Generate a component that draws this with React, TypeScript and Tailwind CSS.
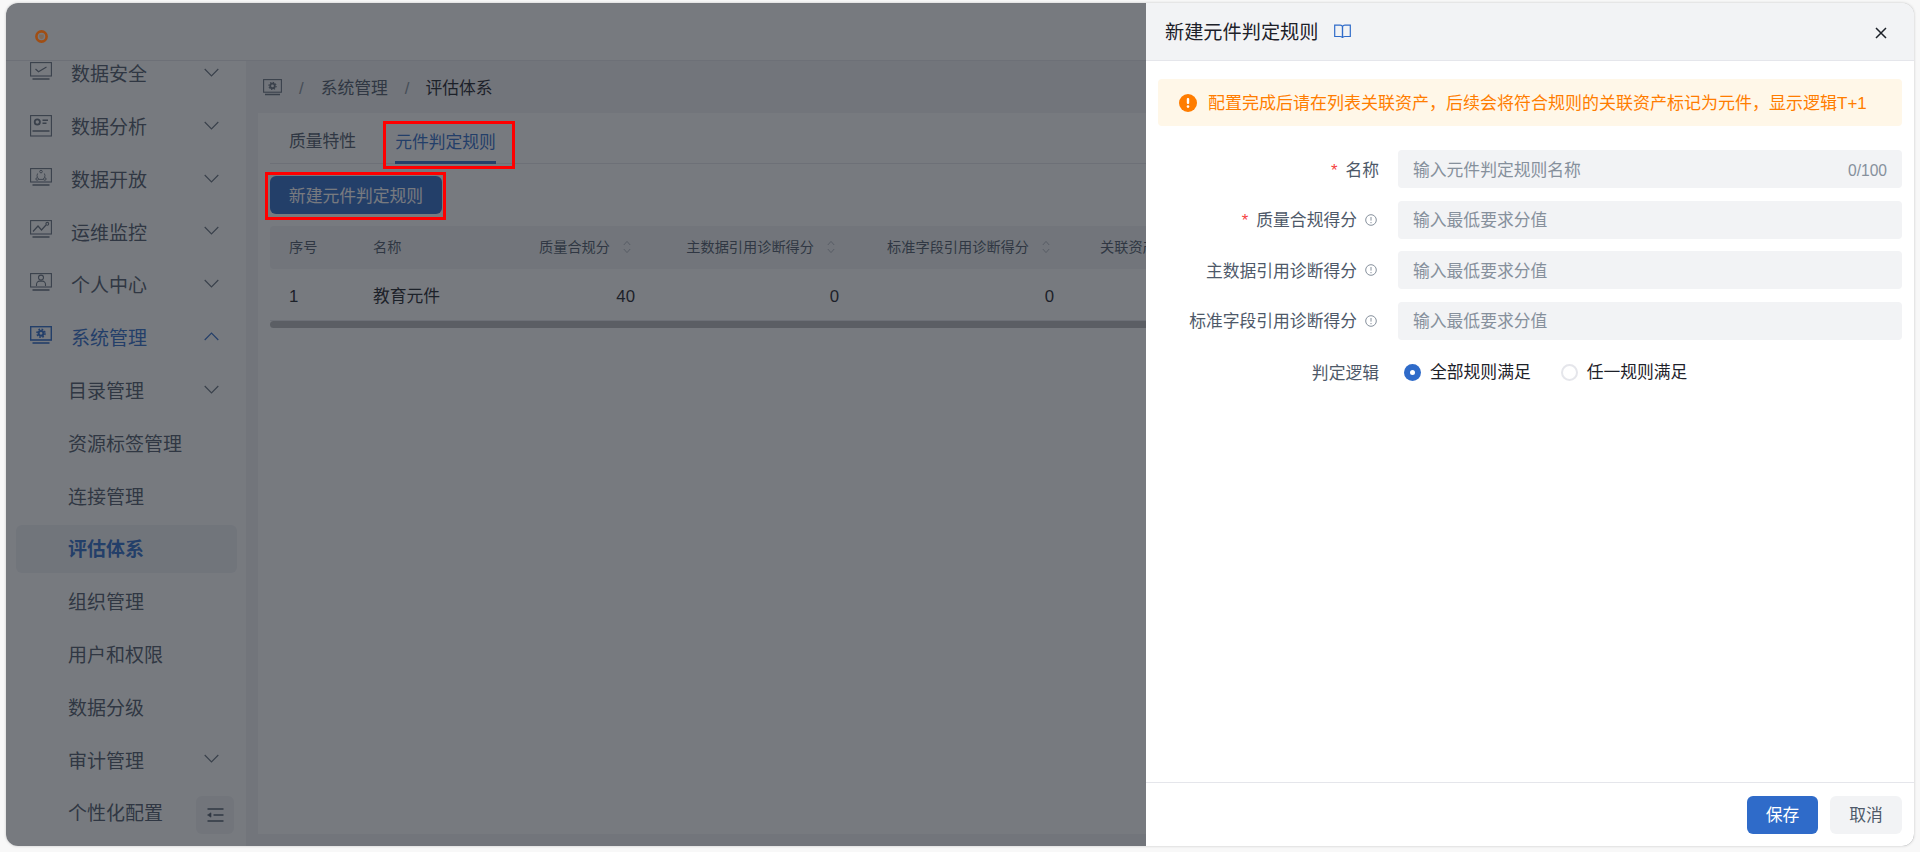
import React from "react";

const FONT = "[font-family:'Liberation_Sans','Noto_Sans_CJK_SC',sans-serif]";

function NavIcon({ children, blue, tall }: { children?: React.ReactNode; blue?: boolean; tall?: boolean }) {
  const c = blue ? "#2f6bc9" : "#66707e";
  return (
    <svg width="22" height="22" viewBox="0 0 22 22" fill="none" stroke={c} strokeWidth="1.1" className="shrink-0 mb-[2px]">
      {tall ? (
        <rect x="0.6" y="0.6" width="20.8" height="20.4" />
      ) : (
        <>
          <rect x="0.6" y="0.6" width="20.8" height="13.4" strokeWidth={blue ? 1.6 : 1.1} />
          <path d="M2.5 17h17" strokeWidth="1.6" />
        </>
      )}
      <g>{children}</g>
    </svg>
  );
}

function Chevron({ up }: { up?: boolean }) {
  return (
    <svg width="15" height="9" viewBox="0 0 15 9" fill="none" stroke={up ? "#2f6bc9" : "#66707e"} strokeWidth="1.2" className="shrink-0 ml-auto mb-[3px]">
      <path d={up ? "M0.7 8L7.5 1.2L14.3 8" : "M0.7 1L7.5 7.8L14.3 1"} />
    </svg>
  );
}

function SortIcon() {
  return (
    <svg width="8" height="14" viewBox="0 0 8 14" fill="none" stroke="#a9aeb8" strokeWidth="0.9" className="shrink-0">
      <path d="M0.8 5L4 1.4L7.2 5" />
      <path d="M0.8 9L4 12.6L7.2 9" />
    </svg>
  );
}

function InfoIcon() {
  return (
    <svg width="12" height="12" viewBox="0 0 12 12" fill="none" stroke="#86909c" strokeWidth="1" className="shrink-0">
      <circle cx="6" cy="6" r="5.3" />
      <path d="M6 3v3.6" />
      <path d="M6 8v1.2" />
    </svg>
  );
}

const nav: { label: string; tall?: boolean; icon: React.ReactNode }[] = [
  { label: "数据安全", icon: <path d="M5.500 7L8.500 9.800L16.500 5" strokeWidth="1.200" /> },
  {
    label: "数据分析",
    tall: true,
    icon: (
      <>
        <circle cx="7.300" cy="7" r="2.600" strokeWidth="1.800" />
        <path d="M12.500 5.200h5.500M12.500 8.200h4" strokeWidth="1.600" />
        <path d="M2.500 16h17" strokeWidth="1.400" />
      </>
    ),
  },
  {
    label: "数据开放",
    icon: (
      <>
        <path d="M7.600 5.500A4.800 4.800 0 0 0 7.400 9.500M14.400 5.500A4.800 4.800 0 0 1 14.600 9.500M9 11.400h4" strokeWidth="0.900" />
        <circle cx="11" cy="3.600" r="1.300" strokeWidth="0.900" />
        <circle cx="7.200" cy="11" r="1.300" strokeWidth="0.900" />
        <circle cx="14.800" cy="11" r="1.300" strokeWidth="0.900" />
      </>
    ),
  },
  {
    label: "运维监控",
    icon: (
      <>
        <path d="M3 11.500L8 6L11.500 10L16 5" strokeWidth="1.200" />
        <circle cx="17.300" cy="3.800" r="1.400" />
      </>
    ),
  },
  {
    label: "个人中心",
    icon: (
      <>
        <circle cx="11" cy="4.600" r="2.500" />
        <path d="M6.500 13v-1.500c0-2 1.600-3.400 3-3.400h3c1.400 0 3 1.400 3 3.400V13" />
      </>
    ),
  },
];

const sub = ["目录管理", "资源标签管理", "连接管理", "评估体系", "组织管理", "用户和权限", "数据分级", "审计管理"];
const itemClass = "flex items-center h-12 mb-[4.8px] ml-[10px] w-[221px] rounded-md text-[19px]";

function Sidebar() {
  return (
    <aside className="w-[240px] shrink-0 bg-white overflow-hidden">
      <div className="-mt-[11px]">
        {nav.map((n) => (
          <div key={n.label} className={`${itemClass} pl-[14px] pr-[18px] text-[#4e5969]`}>
            <NavIcon tall={n.tall}>{n.icon}</NavIcon>
            <span className="ml-[19px] pt-[3px]">{n.label}</span>
            <Chevron />
          </div>
        ))}
        <div className={`${itemClass} pl-[14px] pr-[18px] text-[#2f6bc9]`}>
          <NavIcon blue>
            <circle cx="11" cy="7.300" r="2.400" strokeWidth="2" />
            <circle cx="11" cy="7.300" r="4" strokeDasharray="1.700 1.450" strokeWidth="1.600" />
          </NavIcon>
          <span className="ml-[19px] pt-[3px]">系统管理</span>
          <Chevron up />
        </div>
        {sub.map((s) => {
          const active = s === "评估体系";
          const hasChevron = s === "目录管理" || s === "审计管理";
          return (
            <div
              key={s}
              className={`${itemClass} pl-[52px] pr-[18px] ${active ? "bg-[#f0f2f6] text-[#2f6bc9] font-bold" : "text-[#4e5969]"}`}
            >
              <span className="pt-[3px]">{s}</span>
              {hasChevron && <Chevron />}
            </div>
          );
        })}
        <div className={`${itemClass} pl-[52px] pr-[3px] text-[#4e5969] justify-between`}>
          <span className="pt-[3px]">个性化配置</span>
          <button className="w-[38px] h-[38px] mt-[4px] rounded-md bg-[#f2f3f5] flex items-center justify-center">
            <svg width="17" height="14" viewBox="0 0 17 14" fill="none" stroke="#4e5969" strokeWidth="1.500">
              <path d="M0.500 1h16M6.500 7h10M0.500 13h16" />
              <path d="M0.500 7L4 4.800v4.400z" fill="#4e5969" strokeWidth="0.600" />
            </svg>
          </button>
        </div>
      </div>
    </aside>
  );
}

function Breadcrumb() {
  return (
    <div className="h-[52px] shrink-0 flex items-center pl-[5px] text-[16.8px] text-[#4e5969]">
      <svg width="19" height="17" viewBox="0 0 19 17" fill="none" stroke="#66707e" strokeWidth="1.100" className="mt-[1px]">
        <rect x="0.600" y="0.600" width="17.800" height="12.600" />
        <path d="M2 15.500h15" strokeWidth="1.400" />
        <circle cx="9.500" cy="6.900" r="2.300" strokeWidth="1.800" />
        <circle cx="9.500" cy="6.900" r="3.600" strokeDasharray="1.400 1.400" strokeWidth="1.200" />
      </svg>
      <span className="ml-[17px] pt-[4px] text-[#86909c]">/</span>
      <span className="ml-[17px] pt-[4px]">系统管理</span>
      <span className="ml-[17px] pt-[4px] text-[#86909c]">/</span>
      <span className="ml-[16px] pt-[4px] text-[#1d2129]">评估体系</span>
    </div>
  );
}

function Th({ label }: { label: string }) {
  return (
    <div className="flex items-center justify-end gap-[13px] pr-[20px]">
      <span>{label}</span>
      <SortIcon />
    </div>
  );
}

const tableGrid = "grid grid-cols-[84px_166px_131px_204px_215px_1fr] items-center";

function Content() {
  return (
    <section className="flex-1 min-h-0 bg-white px-3 flex flex-col">
      <div className="h-[51px] shrink-0 flex border-b border-[#e5e6eb] text-[16.8px]">
        <div className="ml-[19px] flex items-center pt-[11px] pb-[3px] text-[#4e5969]">质量特性</div>
        <div className="ml-[39px] flex items-center pt-[11px] border-b-[3px] border-[#2f6bc9] -mb-px text-[#2f6bc9]">元件判定规则</div>
      </div>
      <button className="mt-3 w-[172px] h-[38px] shrink-0 rounded-md bg-[#2f6bc9] text-white text-[16.8px] pt-[3px]">新建元件判定规则</button>
      <div className={`mt-3 h-[43px] shrink-0 rounded bg-[#f2f3f5] text-[14.2px] text-[#4e5969] ${tableGrid}`}>
        <div className="pl-[19px]">序号</div>
        <div className="pl-[19px]">名称</div>
        <Th label="质量合规分" />
        <Th label="主数据引用诊断得分" />
        <Th label="标准字段引用诊断得分" />
        <div className="pl-[30px]">关联资产</div>
      </div>
      <div className={`h-[52px] shrink-0 border-b border-[#e5e6eb] text-[16.8px] text-[#1d2129] pt-[4px] ${tableGrid}`}>
        <div className="pl-[19px]">1</div>
        <div className="pl-[19px]">教育元件</div>
        <div className="text-right pr-4">40</div>
        <div className="text-right pr-4">0</div>
        <div className="text-right pr-4">0</div>
        <div />
      </div>
      <div className="h-[7px] shrink-0 rounded-full bg-[#b9babc]" />
    </section>
  );
}

function FormRow({ label, required, info, children }: { label: string; required?: boolean; info?: boolean; children: React.ReactNode }) {
  return (
    <div className="flex items-center h-[38px]">
      <div className="w-[221px] shrink-0 flex items-center justify-end text-[16.8px] text-[#4e5969]">
        {required && <span className="text-[#f53f3f] mr-[8px] pt-[3px]">*</span>}
        <span className="pt-[3px]">{label}</span>
        {info && <span className="ml-[8px] mr-[2px] flex"><InfoIcon /></span>}
      </div>
      <div className="ml-[19px] flex-1 min-w-0 flex items-center">{children}</div>
    </div>
  );
}

function TextBox({ placeholder, count }: { placeholder: string; count?: string }) {
  return (
    <div className="h-[38px] w-full rounded bg-[#f2f3f5] flex items-center justify-between px-[15px] pt-[3px] text-[16.8px] text-[#86909c]">
      <span>{placeholder}</span>
      {count && <span className="text-[15.6px]">{count}</span>}
    </div>
  );
}

function Radio({ label, on }: { label: string; on?: boolean }) {
  return (
    <div className="flex items-center gap-[9px] text-[16.8px] text-[#1d2129]">
      {on ? (
        <span className="w-[17px] h-[17px] rounded-full bg-[#2f6bc9] flex items-center justify-center">
          <span className="w-[5px] h-[5px] rounded-full bg-white" />
        </span>
      ) : (
        <span className="w-[17px] h-[17px] rounded-full border-2 border-[#e5e6eb] bg-white" />
      )}
      <span className="pt-[2px]">{label}</span>
    </div>
  );
}

function Drawer() {
  return (
    <aside className="absolute right-0 top-0 bottom-0 w-[768px] z-20 bg-white flex flex-col">
      <header className="h-[58px] shrink-0 bg-[#f2f3f5] border-b border-[#e5e6eb] flex items-center pl-[19px] pr-[27px]">
        <h2 className="text-[19.2px] leading-none text-[#1d2129] font-normal pt-[2px]">新建元件判定规则</h2>
        <svg width="17" height="16" viewBox="0 0 17 16" fill="none" stroke="#2f6bc9" strokeWidth="1.200" className="ml-[15px] mt-[1px]">
          <path d="M0.700 1.200h5.300c1.400 0 2.500.6 2.500 2v10.800c0-1-1-1.500-2.500-1.500H0.700z" />
          <path d="M16.300 1.200h-5.300c-1.400 0-2.500.6-2.500 2v10.800c0-1 1-1.500 2.500-1.500h5.300z" />
        </svg>
        <svg width="12" height="12" viewBox="0 0 12 12" fill="none" stroke="#1d2129" strokeWidth="1.500" className="ml-auto mt-[2px]">
          <path d="M1 1l10 10M11 1L1 11" />
        </svg>
      </header>
      <div className="flex-1 min-h-0 px-3 pt-[18px]">
        <div className="h-[47px] rounded bg-[#fff7e8] flex items-center pl-[21px] text-[17px] text-[#ff7d00]">
          <span className="w-[18px] h-[18px] rounded-full bg-[#ff7d00] flex items-center justify-center shrink-0">
            <svg width="4" height="10" viewBox="0 0 4 10" fill="#fff">
              <rect x="0.800" width="2.400" height="6" rx="1" />
              <circle cx="2" cy="8.600" r="1.300" />
            </svg>
          </span>
          <span className="ml-[11px] pt-[2px]">配置完成后请在列表关联资产，后续会将符合规则的关联资产标记为元件，显示逻辑T+1</span>
        </div>
        <div className="mt-6 flex flex-col gap-[12.500px]">
          <FormRow label="名称" required>
            <TextBox placeholder="输入元件判定规则名称" count="0/100" />
          </FormRow>
          <FormRow label="质量合规得分" required info>
            <TextBox placeholder="输入最低要求分值" />
          </FormRow>
          <FormRow label="主数据引用诊断得分" info>
            <TextBox placeholder="输入最低要求分值" />
          </FormRow>
          <FormRow label="标准字段引用诊断得分" info>
            <TextBox placeholder="输入最低要求分值" />
          </FormRow>
          <div className="mt-[1px]">
            <FormRow label="判定逻辑">
              <div className="flex items-center gap-[30px] pl-[6px]">
                <Radio label="全部规则满足" on />
                <Radio label="任一规则满足" />
              </div>
            </FormRow>
          </div>
        </div>
      </div>
      <footer className="h-[64px] shrink-0 border-t border-[#e5e6eb] flex items-center justify-end gap-3 pr-3 text-[16.8px]">
        <button className="w-[71px] h-[38px] rounded-md bg-[#2f6bc9] text-white pt-[3px]">保存</button>
        <button className="w-[72px] h-[38px] rounded-md bg-[#f2f3f5] text-[#4e5969] pt-[3px]">取消</button>
      </footer>
    </aside>
  );
}

export default function App() {
  return (
    <div className={`relative w-[1920px] h-[852px] overflow-hidden bg-[#f8f8f8] pl-[6px] pt-[3px] pr-[6px] pb-[6px] ${FONT}`}>
      <div className="relative w-full h-full rounded-xl overflow-hidden bg-white shadow-[0_0_3px_rgba(0,0,0,0.2)] flex flex-col">
        <header className="h-[58px] shrink-0 bg-white border-b border-[#e5e6eb] flex items-center pl-[29px]">
          <svg width="13" height="13" viewBox="0 0 13 13" className="relative z-20 mt-[10px]">
            <circle cx="6.500" cy="6.500" r="5.100" fill="none" stroke="#a04e14" strokeWidth="2.600" />
            <path d="M4.200 4.400h4.600v2.200c0 1.400-1.100 2.200-2.300 2.700-1.200-.5-2.300-1.300-2.300-2.700z" fill="#7d6a5c" />
          </svg>
        </header>
        <div className="flex-1 min-h-0 flex">
          <Sidebar />
          <main className="flex-1 min-w-0 bg-[#f2f3f5] px-3 pb-3 flex flex-col">
            <Breadcrumb />
            <Content />
          </main>
        </div>
        <div className="absolute inset-0 z-10 bg-[rgba(29,33,41,0.6)]" />
        <Drawer />
      </div>
      <div className="absolute left-[383px] top-[121px] w-[132px] h-[48px] z-30 border-[3px] border-[#ff0000]" />
      <div className="absolute left-[265px] top-[172px] w-[181px] h-[48px] z-30 border-[3px] border-[#ff0000]" />
    </div>
  );
}
